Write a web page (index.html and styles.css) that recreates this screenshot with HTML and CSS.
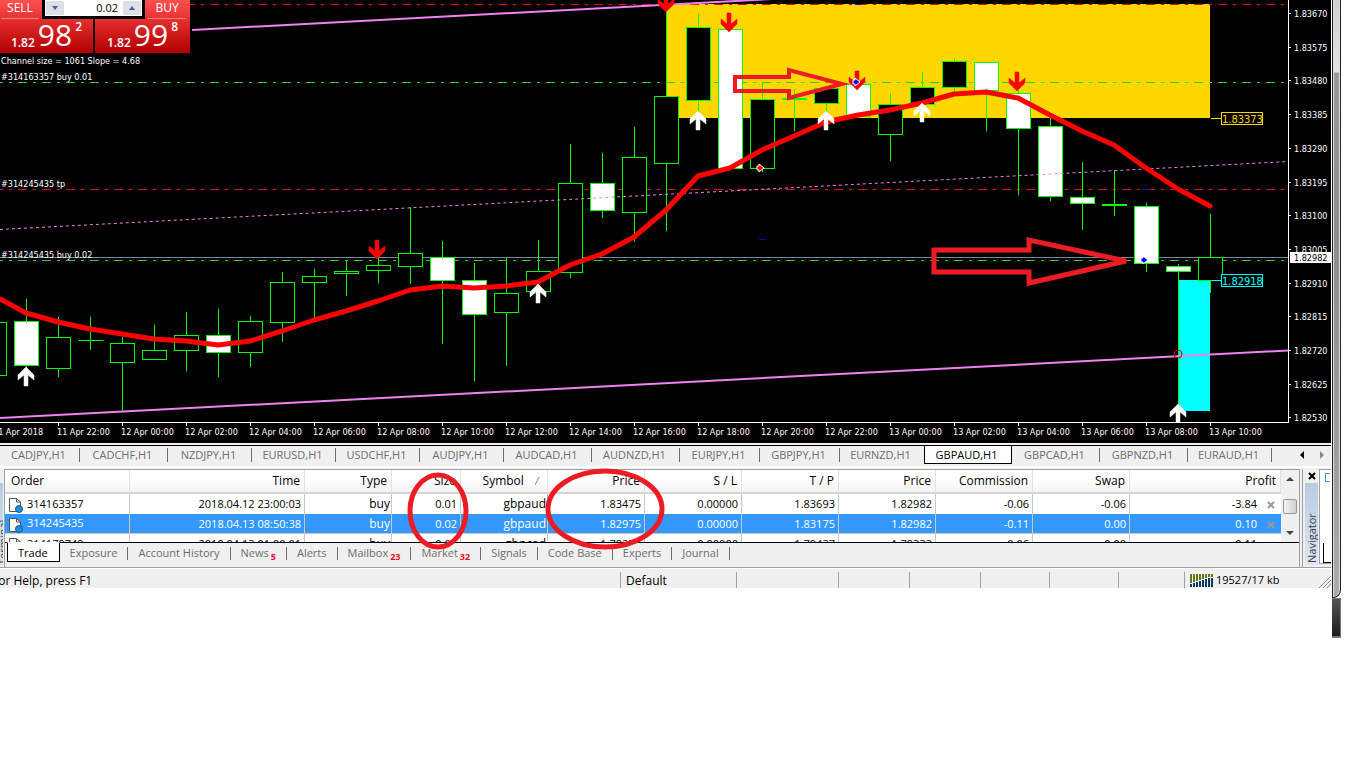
FILE: index.html
```html
<!DOCTYPE html>
<html lang="en">
<head>
    <meta charset="UTF-8">
    <meta name="viewport" content="width=device-width, initial-scale=1.0">
    <title>GBPAUD,H1</title>
    <link rel="stylesheet" href="styles.css">
</head>
<body>
    <main class="workspace">
        <section class="chart-window">
            <svg id="chart" class="chart" viewBox="0 0 1331 443"></svg>
            <form class="trade-panel">
                <button type="button" class="deal">
                    <span class="deal-name">SELL</span>
                    <span class="deal-price"><span class="small">1.82</span><span class="big">98</span><sup>2</sup></span>
                </button>
                <button type="button" class="deal buy">
                    <span class="deal-name">BUY</span>
                    <span class="deal-price"><span class="small">1.82</span><span class="big">99</span><sup>8</sup></span>
                </button>
                <div class="volume">
                    <button type="button" class="spin" aria-label="Less"><svg viewBox="0 0 6 4"><path d="M0 0H6L3 4Z"/></svg></button>
                    <input type="text" value="0.02" aria-label="Volume">
                    <button type="button" class="spin" aria-label="More"><svg viewBox="0 0 6 4"><path d="M0 4H6L3 0Z"/></svg></button>
                </div>
            </form>
        </section>

        <nav class="chart-tabs">
            <button class="w80">CADJPY,H1</button>
            <button class="w88">CADCHF,H1</button>
            <button class="w84">NZDJPY,H1</button>
            <button class="w84">EURUSD,H1</button>
            <button class="w84">USDCHF,H1</button>
            <button class="w84">AUDJPY,H1</button>
            <button class="w88">AUDCAD,H1</button>
            <button class="w88">AUDNZD,H1</button>
            <button class="w80">EURJPY,H1</button>
            <button class="w80">GBPJPY,H1</button>
            <button class="w84 last">EURNZD,H1</button>
            <button class="w88 active">GBPAUD,H1</button>
            <button class="w88">GBPCAD,H1</button>
            <button class="w88">GBPNZD,H1</button>
            <button class="w84">EURAUD,H1</button>
            <span class="tab-scroll">
                <svg viewBox="0 0 24 8"><path d="M4 0V8L0 4Z" fill="#000"/><path d="M20 0V8L24 4Z" fill="#888"/></svg>
            </span>
        </nav>

        <div class="docks">
            <div class="dock-title left"><span>Terminal</span></div>
            <section class="terminal">
                <div class="orders">
                    <table>
                        <colgroup>
                            <col class="c-order"><col class="c-time"><col class="c-type"><col class="c-size"><col class="c-symbol">
                            <col class="c-price"><col class="c-price"><col class="c-price"><col class="c-price"><col class="c-price"><col class="c-price">
                            <col>
                        </colgroup>
                        <thead>
                            <tr>
                                <th class="first">Order</th><th>Time</th><th>Type</th><th>Size</th>
                                <th class="sorted">Symbol <svg class="sort" viewBox="0 0 8 8"><path d="M0 8L4 0" stroke="#888" fill="none"/></svg></th>
                                <th>Price</th><th>S / L</th><th>T / P</th><th>Price</th><th>Commission</th><th>Swap</th><th>Profit</th>
                            </tr>
                        </thead>
                        <tbody>
                            <tr>
                                <td class="first"><svg class="doc"><use href="#doc"/></svg>314163357</td><td>2018.04.12 23:00:03</td><td class="word">buy</td><td>0.01</td><td class="word">gbpaud</td>
                                <td>1.83475</td><td>0.00000</td><td>1.83693</td><td>1.82982</td><td>-0.06</td><td>-0.06</td>
                                <td>-3.84<button class="close" aria-label="Close order"><svg viewBox="0 0 8 8"><path d="M1 1L7 7M7 1L1 7"/></svg></button></td>
                            </tr>
                            <tr class="selected">
                                <td class="first"><svg class="doc"><use href="#doc"/></svg>314245435</td><td>2018.04.13 08:50:38</td><td class="word">buy</td><td>0.02</td><td class="word">gbpaud</td>
                                <td>1.82975</td><td>0.00000</td><td>1.83175</td><td>1.82982</td><td>-0.11</td><td>0.00</td>
                                <td>0.10<button class="close" aria-label="Close order"><svg viewBox="0 0 8 8"><path d="M1 1L7 7M7 1L1 7"/></svg></button></td>
                            </tr>
                            <tr>
                                <td class="first"><svg class="doc"><use href="#doc"/></svg>314179749</td><td>2018.04.13 01:00:01</td><td class="word">buy</td><td>0.01</td><td class="word">gbpcad</td>
                                <td>1.79275</td><td>0.00000</td><td>1.79437</td><td>1.79333</td><td>-0.06</td><td>0.00</td>
                                <td>0.11<button class="close" aria-label="Close order"><svg viewBox="0 0 8 8"><path d="M1 1L7 7M7 1L1 7"/></svg></button></td>
                            </tr>
                        </tbody>
                    </table>
                    <div class="scrollbar">
                        <svg viewBox="0 0 8 4"><path d="M0 4H8L4 0Z"/></svg>
                        <span class="thumb"></span>
                        <svg viewBox="0 0 8 4"><path d="M0 0H8L4 4Z"/></svg>
                    </div>
                </div>
                <nav class="terminal-tabs">
                    <button class="active">Trade</button>
                    <button>Exposure</button>
                    <button>Account History</button>
                    <button>News<sub>5</sub></button>
                    <button>Alerts</button>
                    <button>Mailbox<sub>23</sub></button>
                    <button>Market<sub>32</sub></button>
                    <button>Signals</button>
                    <button>Code Base</button>
                    <button>Experts</button>
                    <button>Journal</button>
                </nav>
                <svg class="marks" viewBox="0 0 260 90">
                    <ellipse cx="33" cy="47" rx="28" ry="36"/>
                    <ellipse cx="200" cy="45" rx="57" ry="38"/>
                </svg>
            </section>
            <aside class="navigator">
                <div class="nav-bar">
                    <button class="nav-close" aria-label="Close navigator"><svg viewBox="0 0 8 8"><path d="M1 1L7 7M7 1L1 7"/></svg></button>
                    <div class="dock-title"><span>Navigator</span></div>
                </div>
                <div class="nav-tree">
                    <i class="nav-node"></i>
                    <i class="nav-tab"></i>
                </div>
            </aside>
        </div>

        <footer class="status">
            <span class="help">For Help, press F1</span>
            <span class="s116">Default</span>
            <span class="s102"></span>
            <span class="s71"></span>
            <span class="s71"></span>
            <span class="s69"></span>
            <span class="s69"></span>
            <span class="s66"></span>
            <span class="traffic">
                <svg class="bars" viewBox="0 0 23 13">
                    <path d="M1 0V9M4 0V8M7 0V7M10 0V6M13 0V5M16 0V4M19 0V3M22 0V3" stroke="#5f7a10" stroke-width="2"/>
                    <path d="M1 10V13M4 9V13M7 8V13M10 7V13M13 6V13M16 5V13M19 4V13M22 4V13" stroke="#0c3c60" stroke-width="2"/>
                </svg>
                19527/17 kb
            </span>
            <svg class="grip" viewBox="0 0 12 12"><path d="M0 12L12 0M4 12L12 4M8 12L12 8" stroke="#8c8c8c" fill="none"/></svg>
        </footer>
    </main>
    <div class="frame">
        <div class="edge"></div>
        <div class="taskbar"></div>
    </div>

    <svg width="0" height="0" class="defs">
        <symbol id="doc" viewBox="0 0 15 16">
            <path d="M1.5 1.5H8.5L12.5 5V14.5H1.5Z" fill="#fafafa" stroke="#555"/>
            <path d="M8.5 1.5V5H12.5" fill="none" stroke="#555"/>
            <circle cx="11" cy="12" r="3.5" fill="#1e90d8" stroke="#0b5c98"/>
        </symbol>
    </svg>
    <script src="script.js"></script>
</body>
</html>
```

FILE: styles.css
```css
* {
    box-sizing: border-box;
}
body {
    margin: 0;
    padding-right: 19px;
    display: flex;
    align-items: flex-start;
    background: #fff;
    color: #000;
    font-family: "Open Sans", "Noto Sans", sans-serif;
    font-size: 12px;
    overflow: hidden;
}
button {
    font: inherit;
    color: inherit;
    border: 0;
    padding: 0;
    background: none;
    cursor: pointer;
}
.defs {
    position: absolute;
}
.workspace {
    flex: 1;
    min-width: 0;
    background: #f0f0f0;
}

/* chart */
.chart-window {
    position: relative;
    background: #000;
}
.chart {
    display: block;
    width: 100%;
    height: auto;
}
.chart text {
    font-family: "DejaVu Sans Condensed", "DejaVu Sans", sans-serif;
    font-size: 9px;
    fill: #fff;
}
.chart text.tag {
    font-size: 11px;
}

/* one click trading */
.trade-panel {
    position: absolute;
    top: 0;
    left: 0;
    display: flex;
    gap: 2px;
    background: #000;
}
.deal {
    width: 93px;
    height: 53px;
    background: linear-gradient(#ff5050, #d82020 55%, #b00000);
    color: #fff;
    display: flex;
    flex-direction: column;
    align-items: flex-start;
}
.buy {
    width: 95px;
    align-items: flex-end;
}
.deal-name {
    width: 38px;
    height: 19px;
    line-height: 15px;
    border-bottom: 1px solid #ff8080;
    margin: 0 1px;
    text-align: center;
}
.buy .deal-name {
    margin-right: 4px;
}
.deal-price {
    align-self: center;
    display: flex;
    align-items: flex-end;
    gap: 3px;
    height: 33px;
}
.small {
    font-weight: 600;
    line-height: 18px;
}
.big {
    font-size: 30px;
    line-height: 34px;
}
.deal sup {
    align-self: flex-start;
    font-size: 12px;
    font-weight: 600;
    line-height: 16px;
}
.volume {
    position: absolute;
    left: 42px;
    top: 0;
    width: 103px;
    height: 19px;
    padding: 0 3px 3px;
    background: #000;
    display: flex;
}
.volume input {
    flex: 1;
    min-width: 0;
    border: 0;
    padding: 0 4px 2px;
    text-align: right;
    font: inherit;
    font-size: 11px;
}
.spin {
    width: 20px;
    border: 1px solid #fff;
    background: #dde0e6;
    display: flex;
    align-items: center;
    justify-content: center;
}
.spin svg {
    width: 6px;
    height: 4px;
    fill: #4a5f9c;
}

/* chart tabs */
.chart-tabs {
    display: flex;
    height: 23px;
    margin-top: 2px;
    border-top: 1px solid #000;
    border-bottom: 2px solid #fff;
    color: #6d6d6d;
    font-size: 11px;
}
.chart-tabs button {
    height: 18px;
    line-height: 18px;
    padding-right: 3px;
    position: relative;
}
.chart-tabs button::after {
    content: "";
    position: absolute;
    right: 0;
    top: 2px;
    height: 14px;
    border-right: 1px solid #6d6d6d;
}
.chart-tabs .last::after,
.chart-tabs .active::after {
    display: none;
}
.chart-tabs .active {
    background: #fff;
    color: #000;
    border: 1px solid #000;
    border-top: 0;
}
.w80 {
    width: 80px;
}
.w84 {
    width: 84px;
}
.w88 {
    width: 88px;
}
.tab-scroll {
    margin-left: auto;
    padding: 5px 7px 0 0;
}
.tab-scroll svg {
    display: block;
    width: 24px;
    height: 8px;
}

/* docked panels */
.docks {
    display: flex;
    height: 99px;
    padding-top: 1px;
}
.dock-title {
    background: linear-gradient(#dbe7f4, #b8cbe2);
    writing-mode: vertical-rl;
    transform: rotate(180deg);
    font-size: 11px;
    color: #444;
    white-space: nowrap;
    overflow: hidden;
}
.dock-title.left {
    width: 3px;
    margin: 14px 1px 2px 0;
    line-height: 6px;
}
.terminal {
    flex: 1;
    min-width: 0;
    position: relative;
    display: flex;
    flex-direction: column;
    border: 1px solid #a0a0a0;
    border-width: 1px 1px 0;
}
.orders {
    display: flex;
    align-items: flex-start;
    height: 73px;
    border-bottom: 1px solid #000;
    overflow: hidden;
}
table {
    flex: 1;
    min-width: 0;
    table-layout: fixed;
    border-collapse: separate;
    border-spacing: 0;
    background: #fff;
}
.c-order {
    width: 125px;
}
.c-time {
    width: 175px;
}
.c-type {
    width: 87px;
}
.c-size {
    width: 69px;
}
.c-symbol {
    width: 87px;
}
.c-price {
    width: 97px;
}
th {
    height: 24px;
    padding: 0 4px;
    line-height: 22px;
    text-align: right;
    font-weight: normal;
    background: linear-gradient(#fff 40%, #f3f4f6);
    border-right: 1px solid #e2e2e2;
    border-bottom: 2px solid #d5d5d5;
}
th.first {
    text-align: left;
    padding-left: 6px;
}
.sort {
    width: 8px;
    height: 8px;
    margin-left: 8px;
}
td {
    height: 20px;
    padding: 0 3px;
    text-align: right;
    font-size: 11px;
    line-height: 18px;
    white-space: nowrap;
    border-right: 1px solid #c8c8c8;
}
td.word {
    font-size: 12px;
    padding-right: 1px;
}
td:last-child {
    border-right: 0;
    padding-right: 6px;
}
td.first {
    text-align: left;
}
.selected td {
    background: #3399ff;
    color: #fff;
    border-bottom: 1px solid #c8c8c8;
}
.doc {
    width: 15px;
    height: 16px;
    margin-right: 4px;
    vertical-align: middle;
}
.close {
    margin-left: 10px;
}
.close svg {
    width: 8px;
    height: 8px;
    stroke: #999;
    stroke-width: 2;
    vertical-align: middle;
}
.scrollbar {
    align-self: stretch;
    width: 18px;
    padding: 7px 2px;
    background: #f0f0f0;
    display: flex;
    flex-direction: column;
    align-items: center;
    justify-content: space-between;
}
.scrollbar svg {
    width: 8px;
    height: 4px;
    fill: #444;
}
.thumb {
    width: 14px;
    height: 15px;
    border: 1px solid #979797;
    border-radius: 2px;
    background: linear-gradient(90deg, #f5f5f5, #d0d0d4);
}
.terminal-tabs {
    display: flex;
    padding-left: 2px;
    color: #6d6d6d;
    font-size: 11px;
}
.terminal-tabs button {
    height: 20px;
    padding: 0 11px 0 10px;
    line-height: 19px;
    display: flex;
    position: relative;
}
.terminal-tabs button::after {
    content: "";
    position: absolute;
    right: 0;
    top: 4px;
    height: 13px;
    border-right: 1px solid #6d6d6d;
}
.terminal-tabs .active {
    margin-top: -1px;
    background: #fff;
    color: #000;
    border: 1px solid #000;
    border-top-color: #fff;
}
.terminal-tabs .active::after {
    display: none;
}
.terminal-tabs sub {
    margin-left: 2px;
    font-size: 9px;
    font-weight: bold;
    line-height: 28px;
    color: #e8112d;
}
.marks {
    position: absolute;
    left: 400px;
    top: -6px;
    width: 260px;
    height: 90px;
    fill: none;
    stroke: #ed1c24;
    stroke-width: 5;
    pointer-events: none;
}
.navigator {
    display: flex;
    width: 29px;
    margin-left: 2px;
    border-left: 1px solid #a0a0a0;
}
.nav-bar {
    width: 16px;
    padding: 0 1px 2px 2px;
    display: flex;
    flex-direction: column;
}
.nav-close {
    height: 14px;
    line-height: 0;
}
.nav-close svg {
    width: 8px;
    height: 8px;
    stroke: #000;
    stroke-width: 2;
}
.nav-bar .dock-title {
    flex: 1;
    width: 13px;
    line-height: 13px;
    padding-top: 2px;
}
.nav-tree {
    flex: 1;
    margin-bottom: 3px;
    border: 1px solid #a0a0a0;
    border-right: 0;
    background: #fff;
    display: flex;
    flex-direction: column;
    justify-content: space-between;
    align-items: flex-end;
}
.nav-node {
    width: 5px;
    height: 9px;
    margin: 3px 1px 0 0;
    border: 1px solid #4a9bd4;
    border-right: 0;
}
.nav-tab {
    width: 8px;
    height: 20px;
    border: solid #000;
    border-width: 0 0 1px 1px;
}

/* status bar */
.status {
    display: flex;
    height: 21px;
    border-top: 1px solid #a0a0a0;
    box-shadow: inset 0 1px #fff;
    padding-top: 4px;
}
.status span {
    line-height: 18px;
    padding-left: 5px;
    border-left: 1px solid #a0a0a0;
}
.status .help {
    flex: 1;
    min-width: 0;
    border: 0;
    padding: 0;
    margin-left: -8px;
}
.s116 {
    width: 116px;
}
.s102 {
    width: 102px;
}
.s71 {
    width: 71px;
}
.s69 {
    width: 69px;
}
.s66 {
    width: 66px;
}
.status .traffic {
    width: 135px;
    display: flex;
    align-items: center;
    gap: 3px;
    font-size: 11px;
}
.bars {
    width: 23px;
    height: 13px;
}
.grip {
    width: 12px;
    height: 12px;
    align-self: flex-end;
}

/* right border of the window */
.frame {
    width: 10px;
}
.edge {
    height: 598px;
    margin-left: 1px;
    border: solid #222;
    border-width: 0 1px 1px 1px;
    border-radius: 0 0 8px 0;
    background: linear-gradient(#d0d0d0, #e4e4e4 72px, #999 73px, #8c8c8c 40%, #aaa);
    box-shadow: inset 1px 0 #ddd, inset -1px 0 #ddd;
}
.taskbar {
    height: 40px;
    border: solid #777;
    border-width: 1px 1px 2px 0;
    margin-left: 1px;
    background: linear-gradient(#555, #1c1c1c);
}
```

FILE: script.js
```js
const svg = document.getElementById("chart");
const parts = [];

// high, open/close top, open/close bottom, low, down (1 = bearish)
const candles = [
    [322, 322, 375, 375, 0],
    [299, 321, 365, 375, 1],
    [317, 337, 368, 377, 0],
    [317, 340, 340, 350, 0],
    [337, 343, 362, 411, 0],
    [325, 350, 359, 359, 0],
    [312, 335, 350, 371, 0],
    [309, 335, 352, 377, 1],
    [316, 321, 352, 367, 0],
    [272, 282, 322, 342, 0],
    [269, 276, 282, 317, 0],
    [260, 271, 273, 296, 0],
    [256, 265, 270, 283, 0],
    [207, 253, 266, 284, 0],
    [241, 257, 280, 344, 1],
    [263, 280, 314, 381, 1],
    [258, 293, 312, 366, 0],
    [240, 271, 291, 291, 0],
    [144, 183, 272, 278, 0],
    [153, 183, 210, 218, 1],
    [127, 157, 212, 242, 0],
    [10, 96, 163, 231, 0],
    [14, 27, 100, 112, 0],
    [29, 29, 168, 168, 1],
    [82, 99, 168, 172, 0],
    [89, 98, 99, 131, 0],
    [88, 88, 103, 113, 0],
    [80, 84, 116, 116, 1],
    [93, 104, 134, 161, 0],
    [72, 87, 104, 110, 0],
    [58, 61, 87, 92, 0],
    [62, 62, 90, 131, 1],
    [90, 93, 128, 195, 1],
    [116, 126, 196, 201, 1],
    [162, 197, 203, 230, 1],
    [170, 204, 205, 216, 0],
    [203, 206, 263, 272, 1],
    [264, 266, 271, 411, 1],
    [214, 257, 280, 293, 0]
];

const average = [299, 313, 322, 329, 334, 339, 341, 345, 341, 331, 320, 311, 301, 290, 286, 288, 286, 282, 265, 254,
    237, 210, 176, 168, 150, 136, 122, 115, 110, 103, 94, 92, 98, 115, 131, 145, 168, 189, 206];

const prices = ["1.83670", "1.83575", "1.83480", "1.83385", "1.83290", "1.83195", "1.83100",
    "1.83005", "1.82910", "1.82815", "1.82720", "1.82625", "1.82530"];

function line(x1, y1, x2, y2, color, width, dash) {
    parts.push(`<line x1="${x1}" y1="${y1}" x2="${x2}" y2="${y2}" stroke="${color}" stroke-width="${width || 1}"` +
        (dash ? ` stroke-dasharray="${dash}"` : "") + "/>");
}

function rect(x, y, w, h, fill, stroke) {
    parts.push(`<rect x="${x}" y="${y}" width="${w}" height="${h}" fill="${fill}" stroke="${stroke || "none"}"/>`);
}

function text(x, y, value, color, cls) {
    parts.push(`<text x="${x}" y="${y}" class="${cls || ""}" style="fill:${color || "#fff"}">${value}</text>`);
}

function arrow(x, y, up) {
    parts.push(`<path transform="translate(${x} ${y}) scale(1 ${up ? 1 : -1})" fill="${up ? "#fff" : "#f00"}"
        d="M0 0L8 8V13L2 8V19H-2V8L-8 13V8Z" stroke="${up ? "#fff" : "#f00"}" stroke-width=".5"/>`);
}

function marker(x, y, color) {
    parts.push(`<path transform="translate(${x} ${y})" fill="${color}" stroke="#fff"
        d="M-3 -2H-1V-4L4 0L-1 4V2H-3Z"/>`);
}

// zones
rect(667, 4, 543, 114, "#ffd700");
rect(1179, 280, 31, 131, "#0ff");

// order levels and bid
line(186, 4.5, 1284, 4.5, "#f00", 1, "9 6 3 6");
line(-6, 82.5, 1284, 82.5, "#32cd32", 1, "9 6 3 6");
line(-6, 189.5, 1284, 189.5, "#f00", 1, "9 6 3 6");
line(-6, 260.5, 1284, 260.5, "#32cd32", 1, "9 6 3 6");
line(0, 257.5, 1289, 257.5, "#778899");
line(855, 4.5, 862, 4.5, "#00f");
line(759, 239.5, 766, 239.5, "#00c");
line(1143, 189.5, 1150, 189.5, "#00c");

candles.forEach((c, i) => {
    const x = i * 32 - 5.5;
    line(x, c[0], x, c[1], "#0f0");
    line(x, c[2], x, c[3], "#0f0");
    rect(x - 12, c[1] + 0.5, 24, c[2] - c[1], c[4] ? "#fff" : "#000", "#0f0");
    // flat candle, the body is a single stroke
    if (c[1] === c[2]) {
        line(x - 12, c[1] + 0.5, x + 13, c[1] + 0.5, "#0f0");
    }
});

// channel
line(192, 30, 773, -1, "#ee82ee", 2);
line(0, 229.5, 1288, 161.5, "#ee82ee", 1, "3 3");
line(0, 418, 1288, 350.5, "#ee82ee", 2);

const points = average.map((y, i) => `${i === 0 ? 0 : i * 32 - 6},${y}`).join(" ");
parts.push(`<polyline points="${points}" fill="none" stroke="#f00" stroke-width="5" stroke-linejoin="round" stroke-linecap="round"/>`);

[[26, 367], [538, 284], [698, 111], [826, 111], [922, 103], [1178, 404]].forEach(a => arrow(a[0], a[1], true));
[[377, 259], [666, 12], [729, 32], [857, 90], [1017, 91]].forEach(a => arrow(a[0], a[1], false));

marker(856, 82, "#00f");
marker(760, 168, "#f00");
marker(1144, 260, "#00f");
parts.push('<circle cx="1178" cy="354" r="4" fill="none" stroke="#c00"/>');

parts.push('<path d="M735 77H789V70L842 84L789 98V91H735Z" fill="none" stroke="#ed1c24" stroke-width="4"/>');
parts.push('<path d="M934 250H1029V240L1126 261L1029 283V272H934Z" fill="none" stroke="#ed1c24" stroke-width="5"/>');

// price tags
line(1211, 118.5, 1221, 118.5, "#ffd700");
rect(1221.5, 112.5, 41, 12, "#000", "#ffd700");
text(1222, 123, "1.83373", "#ffd700", "tag");
line(1211, 280.5, 1221, 280.5, "#0ff");
rect(1221.5, 274.5, 41, 12, "#000", "#0ff");
text(1222, 285, "1.82918", "#0ff", "tag");

// axes
rect(0, 423, 1331, 20, "#000");
line(1288.5, 0, 1288.5, 423, "#fff");
line(0, 422.5, 1289, 422.5, "#fff");
prices.forEach((p, i) => {
    const y = Math.round(13 + i * 33.7);
    line(1289, y + 0.5, 1291, y + 0.5, "#fff");
    text(1294, y + 4, p);
});
rect(1290, 252, 41, 11, "#fff");
text(1294, 261, "1.82982", "#000");

text(-7, 435, "11 Apr 2018");
for (let i = 0; i < 19; i++) {
    const hours = 22 + i * 2;
    const day = 11 + Math.floor(hours / 24);
    const x = 58 + i * 64;
    line(x + 0.5, 423, x + 0.5, 426, "#fff");
    text(x - 1, 435, `${day} Apr ${String(hours % 24).padStart(2, "0")}:00`);
}

text(1, 64, "Channel size = 1061 Slope = 4.68");
text(1, 80, "#314163357 buy 0.01");
text(1, 187, "#314245435 tp");
text(1, 258, "#314245435 buy 0.02");

svg.innerHTML = parts.join("");
```
